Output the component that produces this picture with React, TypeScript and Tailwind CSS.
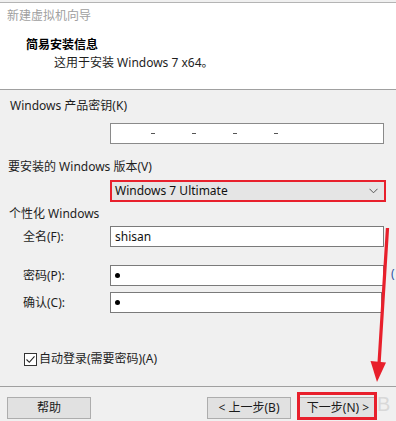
import React from "react";

const font = { fontFamily: '"Noto Sans", "Noto Sans CJK SC", sans-serif' };

function Btn({ children, className = "" }: { children: React.ReactNode; className?: string }) {
  return (
    <div
      className={`h-[22px] flex items-center justify-center bg-[#e1e1e1] border border-[#adadad] text-[12px] text-[#1a1a1a] ${className}`}
    >
      {children}
    </div>
  );
}

function Input({ children, className = "" }: { children?: React.ReactNode; className?: string }) {
  return (
    <div
      className={`h-[21px] bg-white border border-[#7a7a7a] flex items-center px-[4px] text-[12px] text-[#111] ${className}`}
    >
      {children}
    </div>
  );
}

export default function App() {
  return (
    <div className="relative w-[396px] h-[421px] bg-[#f0f0f0] overflow-hidden text-[#1e1e1e]" style={font}>
      {/* header */}
      <div className="bg-white h-[88px] border-b border-[#a0a0a0]">
        <div className="mt-[2px] border-t border-[#b4b4b4] pl-[7px] pt-[5px]">
          <div className="text-[12px] leading-[16px] text-[#a0a0a0]">新建虚拟机向导</div>
          <div className="mt-[13px] pl-[19px] text-[12px] leading-[16px] font-bold text-black">简易安装信息</div>
          <div className="mt-[2px] pl-[47px] text-[12px] leading-[16px] text-[#1e1e1e]">这用于安装 Windows 7 x64。</div>
        </div>
      </div>

      {/* body */}
      <div className="flex flex-col">
        <div className="mt-[8px] ml-[10px] text-[12px] leading-[16px]">Windows 产品密钥(K)</div>
        <div className="mt-[9px] ml-[110px] w-[274px] h-[21px] bg-white border border-[#8a8a8a] relative">
          <div className="absolute top-[9px] left-[40px] w-[4px] h-[1px] bg-[#555]" />
          <div className="absolute top-[9px] left-[81px] w-[4px] h-[1px] bg-[#555]" />
          <div className="absolute top-[9px] left-[122px] w-[4px] h-[1px] bg-[#555]" />
          <div className="absolute top-[9px] left-[163px] w-[4px] h-[1px] bg-[#555]" />
        </div>

        <div className="mt-[15px] ml-[8px] text-[12px] leading-[16px]">要安装的 Windows 版本(V)</div>
        <div className="mt-[5px] ml-[110px] w-[276px] h-[22px] bg-[#e5e5e5] border-2 border-[#e8202c] flex items-center justify-between pl-[3px] pr-[6px]">
          <span className="text-[12px] text-[#111]">Windows 7 Ultimate</span>
          <svg width="9" height="6" viewBox="0 0 9 6">
            <path d="M0.5 0.8 L4.5 4.8 L8.5 0.8" fill="none" stroke="#555" strokeWidth="1" />
          </svg>
        </div>

        <div className="mt-[4px] ml-[9px] text-[12px] leading-[16px]">个性化 Windows</div>

        <div className="mt-[4px] flex items-center">
          <div className="w-[110px] pl-[23px] text-[12px] leading-[16px]">全名(F):</div>
          <Input className="w-[274px]">shisan</Input>
        </div>
        <div className="mt-[18px] flex items-center">
          <div className="w-[110px] pl-[23px] text-[12px] leading-[16px]">密码(P):</div>
          <Input className="w-[274px]">
            <span className="w-[5px] h-[5px] rounded-full bg-black" />
          </Input>
        </div>
        <div className="mt-[6px] flex items-center">
          <div className="w-[110px] pl-[23px] text-[12px] leading-[16px]">确认(C):</div>
          <Input className="w-[272px]">
            <span className="w-[5px] h-[5px] rounded-full bg-black" />
          </Input>
        </div>

        <div className="mt-[38px] ml-[24px] flex items-center gap-[2px]">
          <div className="w-[13px] h-[13px] border border-[#333] bg-white flex items-center justify-center">
            <svg width="11" height="11" viewBox="0 0 11 11">
              <path d="M1.5 5.5 L4.3 8.3 L9.5 2.3" fill="none" stroke="#222" strokeWidth="1.1" />
            </svg>
          </div>
          <span className="text-[12px] leading-[16px]">自动登录(需要密码)(A)</span>
        </div>

        <div className="mt-[19px] border-t border-[#a0a0a0]" />

        <div className="mt-[10px] flex items-center">
          <Btn className="ml-[7px] w-[84px]">帮助</Btn>
          <Btn className="ml-[116px] w-[84px]">&lt; 上一步(B)</Btn>
          <Btn className="ml-[8px] w-[78px]">下一步(N) &gt;</Btn>
        </div>
      </div>

      {/* annotations */}
      <div className="absolute left-[297px] top-[392px] w-[80px] h-[28px] border-[3px] border-[#e8202c]" />
      <div className="absolute left-[377px] top-[392px] text-[20px] leading-[24px] text-[#d8d8d8]" style={{ fontFamily: '"Liberation Sans", sans-serif' }}>
        B
      </div>
      <div className="absolute left-[391px] top-[266px] text-[12px] leading-[16px] text-[#3050a0]">(</div>
      <svg className="absolute left-0 top-0" width="396" height="421" viewBox="0 0 396 421">
        <path d="M387.5 228 L379 364" stroke="#e8202c" strokeWidth="3.2" fill="none" />
        <path d="M370.5 361 L386 362.5 L377 382 Z" fill="#e8202c" />
      </svg>
    </div>
  );
}
